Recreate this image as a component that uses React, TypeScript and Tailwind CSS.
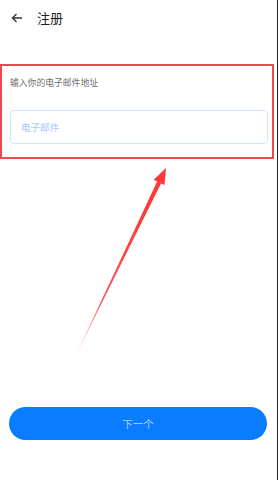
import React from "react"

const font = { fontFamily: '"Noto Sans CJK SC", "Noto Sans", sans-serif' }

function AnnotationArrow() {
  // red hand-drawn style arrow pointing at the email field
  return (
    <svg
      className="pointer-events-none absolute left-0 top-0"
      width="279"
      height="480"
      viewBox="0 0 279 480"
    >
      <defs>
        <linearGradient id="fade" x1="75" y1="357" x2="166" y2="168" gradientUnits="userSpaceOnUse">
          <stop offset="0" stopColor="#ff3b3b" stopOpacity="0.15" />
          <stop offset="0.3" stopColor="#ff3b3b" stopOpacity="0.9" />
          <stop offset="1" stopColor="#ff3434" stopOpacity="1" />
        </linearGradient>
      </defs>
      <polygon
        points="166,168 164.5,185 161,183.4 75,357 157.1,181.5 153.7,179.8"
        fill="url(#fade)"
      />
    </svg>
  )
}

export default function App() {
  return (
    <div className="relative h-[480px] w-[279px] overflow-hidden bg-white" style={font}>
      <div className="flex h-full w-[278px] flex-col border-r border-[#2a2a2a]">
        {/* Header */}
        <div className="flex h-[35px] items-center pl-[11px]">
          <svg width="12" height="10" viewBox="0 0 12 10" fill="none" stroke="#333" strokeWidth="1.3">
            <path d="M11 5H1.5M5.5 1 1.5 5l4 4" />
          </svg>
          <span className="ml-[14px] text-[13px] leading-none text-[#222]">注册</span>
        </div>

        {/* Email section (highlighted) */}
        <div className="ml-0 mt-[29px] h-[95px] w-[274px] border-2 border-[#f04a4e] pl-[8px] pr-[5px] pt-[10px]">
          <div className="text-[8.8px] leading-[13px] text-[#6f6f6f]">输入你的电子邮件地址</div>
          <div className="mt-[21px] flex h-[34px] w-[258px] items-center rounded-[4px] border border-[#d3e4fd] pl-[10px]">
            <span className="text-[9.5px] text-[#a6c8fb]">电子邮件</span>
          </div>
        </div>

        <div className="flex-1" />

        {/* Next button */}
        <div className="mb-[40px] pl-[9px]">
          <button className="flex h-[33px] w-[258px] items-center justify-center rounded-full bg-[#0a7cff] text-[10.5px] text-[#b3d3ff]">
            下一个
          </button>
        </div>
      </div>
      <AnnotationArrow />
    </div>
  )
}
